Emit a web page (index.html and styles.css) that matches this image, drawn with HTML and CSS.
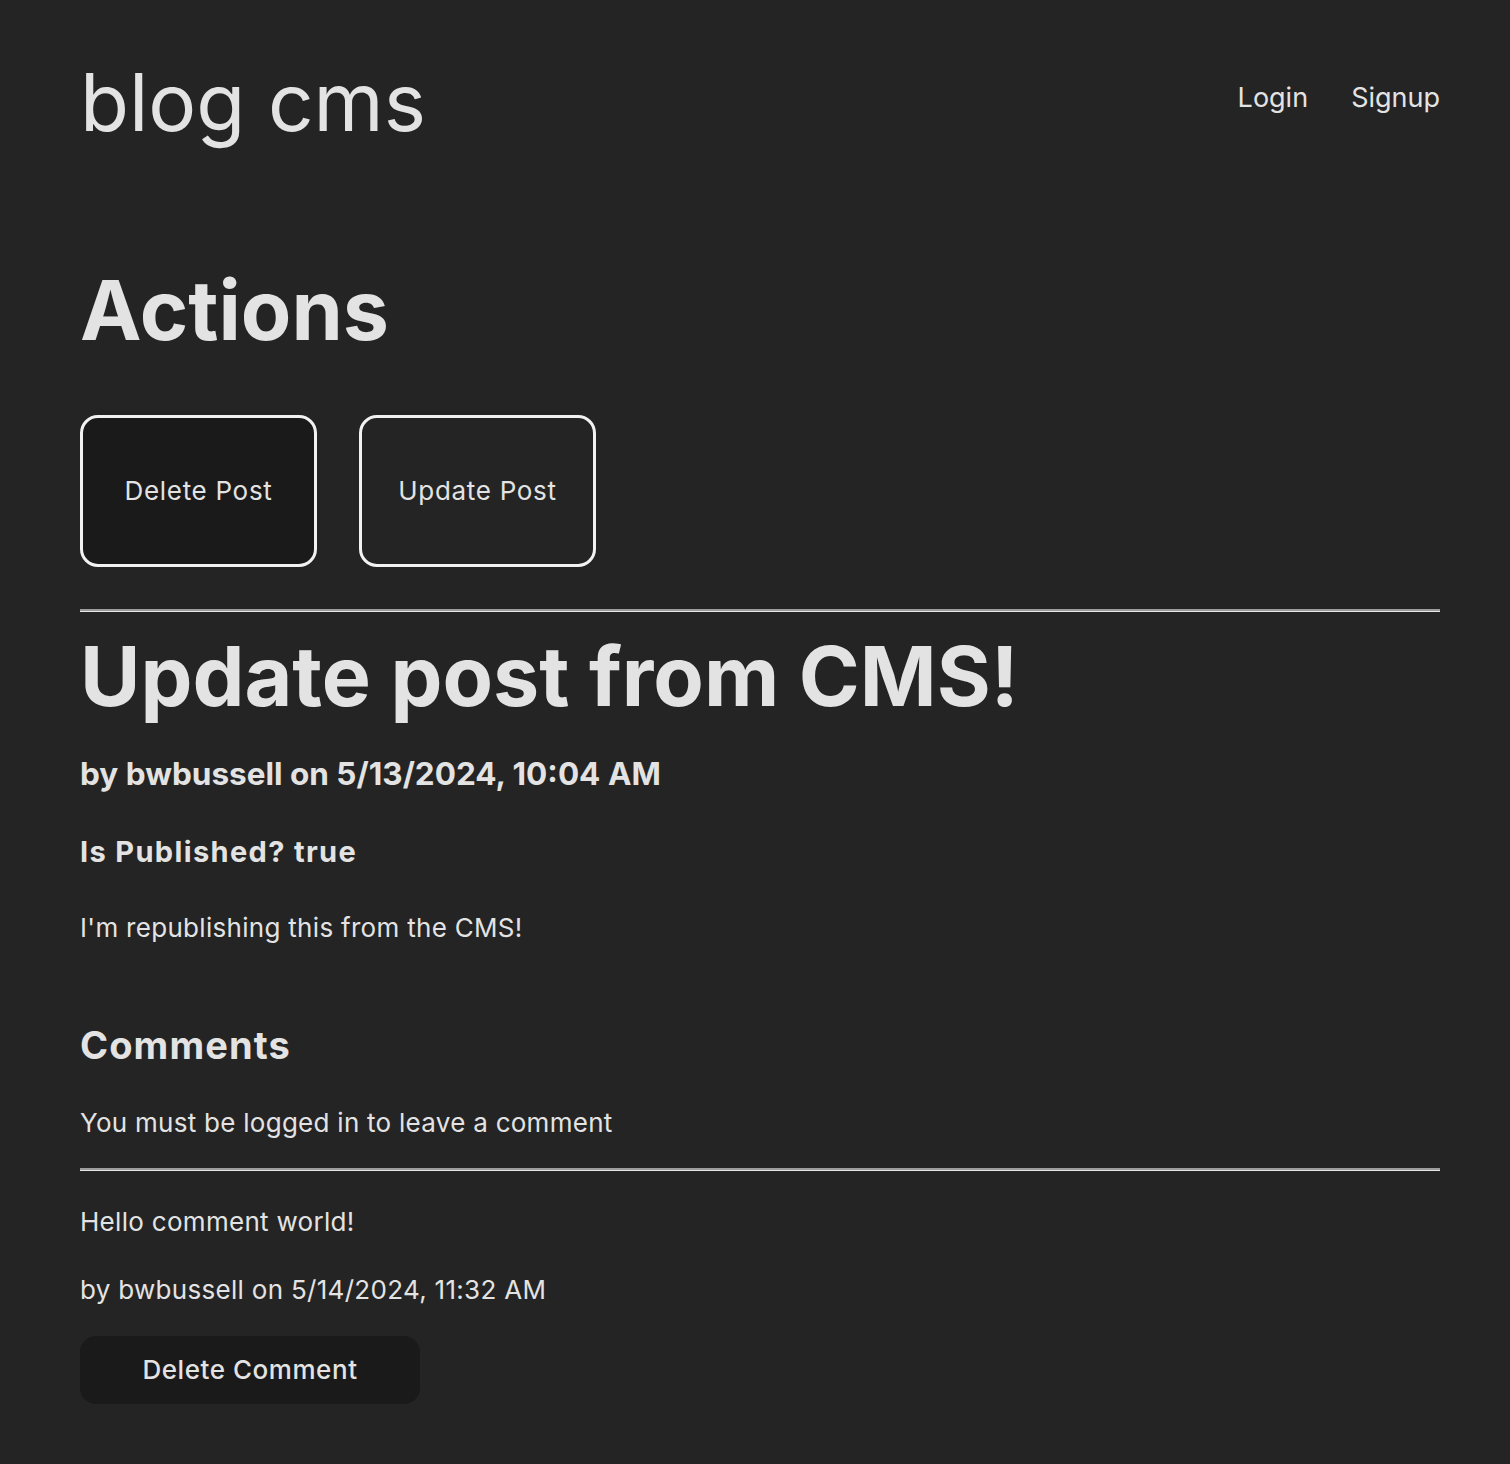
FILE: index.html
```html
<!DOCTYPE html>
<html lang="en">
<head>
<meta charset="utf-8">
<title>blog cms</title>
<link rel="stylesheet" href="styles.css">
</head>
<body>
<div class="page">
  <header class="header">
    <div class="brand">blog cms</div>
    <nav class="nav">
      <a class="nav-link" href="#">Login</a>
      <a class="nav-link" href="#">Signup</a>
    </nav>
  </header>
  <main>
    <h1 class="actions-title">Actions</h1>
    <div class="actions">
      <button class="action-btn action-btn--dark">Delete Post</button>
      <button class="action-btn">Update Post</button>
    </div>
    <hr class="rule rule--top">
    <h1 class="post-title">Update post from CMS!</h1>
    <h2 class="post-meta">by bwbussell on 5/13/2024, 10:04 AM</h2>
    <h3 class="post-status">Is Published? true</h3>
    <p class="post-body">I'm republishing this from the CMS!</p>
    <h2 class="comments-title">Comments</h2>
    <p class="comments-note">You must be logged in to leave a comment</p>
    <hr class="rule rule--comments">
    <p class="comment-text">Hello comment world!</p>
    <p class="comment-meta">by bwbussell on 5/14/2024, 11:32 AM</p>
    <button class="comment-btn">Delete Comment</button>
  </main>
</div>
</body>
</html>
```
FILE: styles.css
```css
* { box-sizing: border-box; }
html, body { margin: 0; padding: 0; }
body {
  background: #242424;
  color: #e3e3e3;
  font-family: Inter, "Noto Sans", sans-serif;
  min-height: 1464px;
}
.page {
  padding: 54px 70px 40px 80px;
}
.header {
  display: flex;
  justify-content: space-between;
  align-items: flex-start;
}
.brand {
  font-size: 80px;
  line-height: 96px;
  font-weight: 400;
}
.nav {
  display: flex;
  gap: 43px;
  margin-top: 28px;
}
.nav-link {
  color: #e3e3e3;
  text-decoration: none;
  font-size: 27px;
  line-height: 32.4px;
}
h1, h2, h3, p { margin: 0; }
.actions-title {
  margin-top: 110px;
  font-size: 82.5px;
  line-height: 100.8px;
  font-weight: 700;
}
.actions {
  display: flex;
  gap: 42px;
  margin-top: 54px;
}
.action-btn {
  width: 237px;
  height: 152px;
  border: 3px solid #f2f2f2;
  border-radius: 18px;
  background: transparent;
  color: #e3e3e3;
  font-family: inherit;
  font-size: 26px;
  font-weight: 400;
  letter-spacing: 0.7px;
}
.action-btn--dark { background: #1a1a1a; }
.rule {
  border: none;
  border-top: 2px solid #9c9c9c;
  border-bottom: 1px solid #e6e6e6;
  height: 0;
  margin: 0;
}
.rule--top { margin-top: 42px; }
.post-title {
  margin-top: 14px;
  font-size: 82.5px;
  line-height: 100.8px;
  font-weight: 700;
}
.post-meta {
  margin-top: 28px;
  font-size: 31.5px;
  line-height: 38.4px;
  font-weight: 700;
}
.post-status {
  margin-top: 42px;
  font-size: 29px;
  line-height: 33.6px;
  font-weight: 700;
  letter-spacing: 1.35px;
}
.post-body {
  margin-top: 43px;
  font-size: 26px;
  line-height: 31.2px;
  letter-spacing: 0.3px;
}
.comments-title {
  margin-top: 80px;
  font-size: 38px;
  line-height: 44.4px;
  font-weight: 700;
  letter-spacing: 1.1px;
}
.comments-note {
  margin-top: 40px;
  font-size: 26px;
  line-height: 31.2px;
  letter-spacing: 0.27px;
}
.rule--comments { margin-top: 30px; }
.comment-text {
  margin-top: 35px;
  font-size: 26px;
  line-height: 31.2px;
  letter-spacing: 0.3px;
}
.comment-meta {
  margin-top: 36px;
  font-size: 26px;
  line-height: 31.2px;
  letter-spacing: 0.3px;
}
.comment-btn {
  display: block;
  margin-top: 31px;
  width: 340px;
  height: 68px;
  border: none;
  border-radius: 16px;
  background: #1a1a1a;
  color: #e3e3e3;
  font-family: inherit;
  font-size: 26px;
  font-weight: 500;
  letter-spacing: 0.55px;
}
```
